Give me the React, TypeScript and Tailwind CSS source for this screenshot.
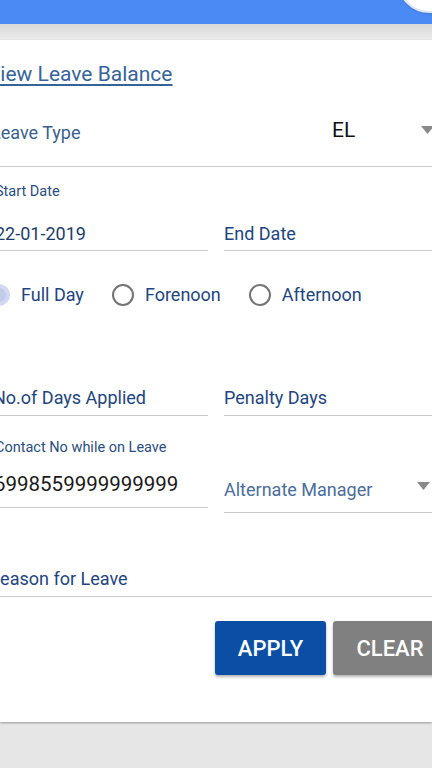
import React from "react";

const font = { fontFamily: "Roboto, 'Noto Sans', sans-serif" };

function Arrow() {
  return (
    <svg width="13" height="8" viewBox="0 0 13 8" className="shrink-0">
      <path d="M0 0 L13 0 L6.5 8 Z" fill="#8a8a8a" />
    </svg>
  );
}

function Radio({ selected, label }: { selected?: boolean; label: string }) {
  return (
    <div className="flex items-center gap-[11px]">
      {selected ? (
        <div className="w-[22px] h-[22px] rounded-full bg-[#d3d9f0] flex items-center justify-center">
          <div className="w-[14px] h-[14px] rounded-full bg-[#c3cbea]" />
        </div>
      ) : (
        <div className="w-[22px] h-[22px] rounded-full border-[2.5px] border-[#747474]" />
      )}
      <span className="text-[18px] text-[#1e4580] leading-none">{label}</span>
    </div>
  );
}

export default function App() {
  return (
    <div className="w-[432px] h-[768px] overflow-hidden relative bg-[#e6e6e6]" style={font}>
      <div className="h-[24px] bg-[#4a8af4] relative">
        <div className="absolute left-[397px] top-[-52px] w-[65px] h-[65px] rounded-full bg-white border-[2px] border-[#dfe6f5] shadow-[0_1px_2px_rgba(0,0,0,0.15)]" />
      </div>
      <div className="h-[16px] bg-gradient-to-b from-[#d9d9d9] to-[#ebebeb]" />
      <div className="bg-white h-[682px] shadow-[0_1px_2px_rgba(0,0,0,0.35)] overflow-hidden">
        <div className="ml-[-10px] w-[452px] flex flex-col">
          <div className="pt-[24px] h-[70px] ml-[-3px]">
            <span className="text-[21px] text-[#35649a] underline underline-offset-[3px] decoration-[1.5px] leading-none">
              View Leave Balance
            </span>
          </div>
          <div className="h-[57px] border-b border-[#cdcdcd] flex items-start pt-[9px] ml-[1px]">
            <span className="text-[18px] text-[#3a5f8e] w-[341px]">Leave Type</span>
            <span className="text-[21px] text-[#111] mt-[-4px]">EL</span>
            <div className="ml-auto mr-[8px] mt-[7px]">
              <Arrow />
            </div>
          </div>
          <div className="ml-[5px] text-[14.5px] text-[#2b4e7f] mt-[18px] leading-none">Start Date</div>
          <div className="flex gap-[16px] mt-[25px]">
            <div className="w-[218px] border-b-[1.5px] border-[#cccccc] pb-[7px] pl-[5px] text-[18px] text-[#1c3d6b] leading-none">
              22-01-2019
            </div>
            <div className="w-[218px] border-b-[1.5px] border-[#cccccc] pb-[7px] text-[18px] text-[#1e4580] leading-none">
              End Date
            </div>
          </div>
          <div className="flex items-center mt-[33px] ml-[-2px] gap-[28px]">
            <Radio selected label="Full Day" />
            <Radio label="Forenoon" />
            <Radio label="Afternoon" />
          </div>
          <div className="flex gap-[16px] mt-[83px]">
            <div className="w-[218px] border-b-[1.5px] border-[#cccccc] pb-[8px] pl-[3px] text-[18px] text-[#1e4580] leading-none">
              No.of Days Applied
            </div>
            <div className="w-[218px] border-b-[1.5px] border-[#cccccc] pb-[8px] text-[18px] text-[#1e4580] leading-none">
              Penalty Days
            </div>
          </div>
          <div className="ml-[5px] text-[14.5px] text-[#2b4e7f] mt-[25px] leading-none">Contact No while on Leave</div>
          <div className="flex gap-[16px] mt-[19px] items-start">
            <div className="w-[218px] border-b-[1.5px] border-[#cccccc] pb-[12px] pl-[4px] text-[20.5px] text-[#1a1a1a] leading-none">
              6998559999999999
            </div>
            <div className="w-[218px] border-b-[1.5px] border-[#cccccc] pb-[13px] pt-[7px] flex items-center text-[18px] text-[#4a6d9c] leading-none">
              <span>Alternate Manager</span>
              <div className="ml-auto mr-[12px] mt-[-8px]">
                <Arrow />
              </div>
            </div>
          </div>
          <div className="mt-[57px] border-b-[1.5px] border-[#cccccc] pb-[8px] ml-[-1px] text-[18px] text-[#1e4580] leading-none">
            Reason for Leave
          </div>
          <div className="flex justify-end gap-[7px] mt-[24px] mr-[-5px]">
            <div className="w-[111px] h-[54px] rounded-[3px] bg-[#0a4ea5] text-white text-[22px] font-medium flex items-center justify-center shadow-[0_2px_3px_rgba(0,0,0,0.3)]">
              APPLY
            </div>
            <div className="w-[114px] h-[54px] rounded-[3px] bg-[#808080] text-white text-[22px] font-medium flex items-center justify-center shadow-[0_2px_3px_rgba(0,0,0,0.3)]">
              CLEAR
            </div>
          </div>
        </div>
      </div>
    </div>
  );
}
